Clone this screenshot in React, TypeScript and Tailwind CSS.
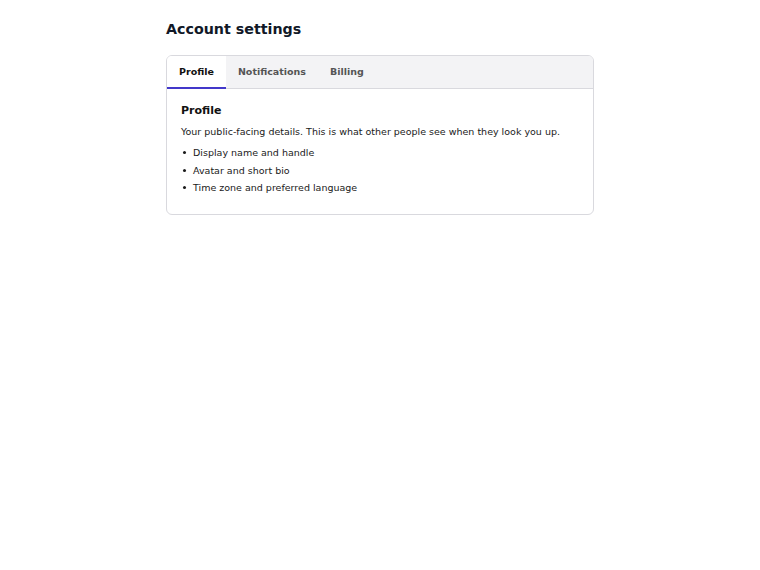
import React, { useState } from "react";

const tabs = ["Profile", "Notifications", "Billing"];
const items = ["Display name and handle", "Avatar and short bio", "Time zone and preferred language"];

export default function App() {
  const [active, setActive] = useState("Profile");
  return (
    <div className="min-h-screen bg-white" style={{ fontFamily: '"DejaVu Sans", sans-serif' }}>
      <div className="mx-auto w-[428px] pt-[19px]">
        <h1 className="text-[14.25px] font-bold text-[#111827] leading-[20px]">Account settings</h1>
        <div className="mt-[16px] rounded-[6px] border border-[#d9d9de] overflow-hidden">
          <div className="flex bg-[#f3f3f5] border-b border-[#d9d9de]">
            {tabs.map((t) => (
              <button
                key={t}
                onClick={() => setActive(t)}
                className={
                  t === active
                    ? "h-[33px] pt-px px-[12px] text-[9.5px] font-bold text-[#111] bg-white border-b-2 border-[#4338ca] -mb-px"
                    : "h-[33px] pt-px px-[12px] text-[9.5px] font-bold text-[#555] border-b-2 border-transparent -mb-px"
                }
              >
                {t}
              </button>
            ))}
          </div>
          <div className="px-[14px] pt-[15px] pb-[17px] text-[#1a1a1a]">
            <h2 className="text-[11px] font-bold text-[#111] leading-[14px]">{active}</h2>
            <p className="mt-[7px] text-[9.5px] leading-[14px]">
              Your public-facing details. This is what other people see when they look you up.
            </p>
            <ul className="mt-[5px] text-[9.5px] leading-[17.5px]">
              {items.map((it) => (
                <li key={it} className="flex items-center">
                  <span className="ml-[2px] mr-[7px] h-[3px] w-[3px] rounded-full bg-[#1a1a1a]" />
                  {it}
                </li>
              ))}
            </ul>
          </div>
        </div>
      </div>
    </div>
  );
}
